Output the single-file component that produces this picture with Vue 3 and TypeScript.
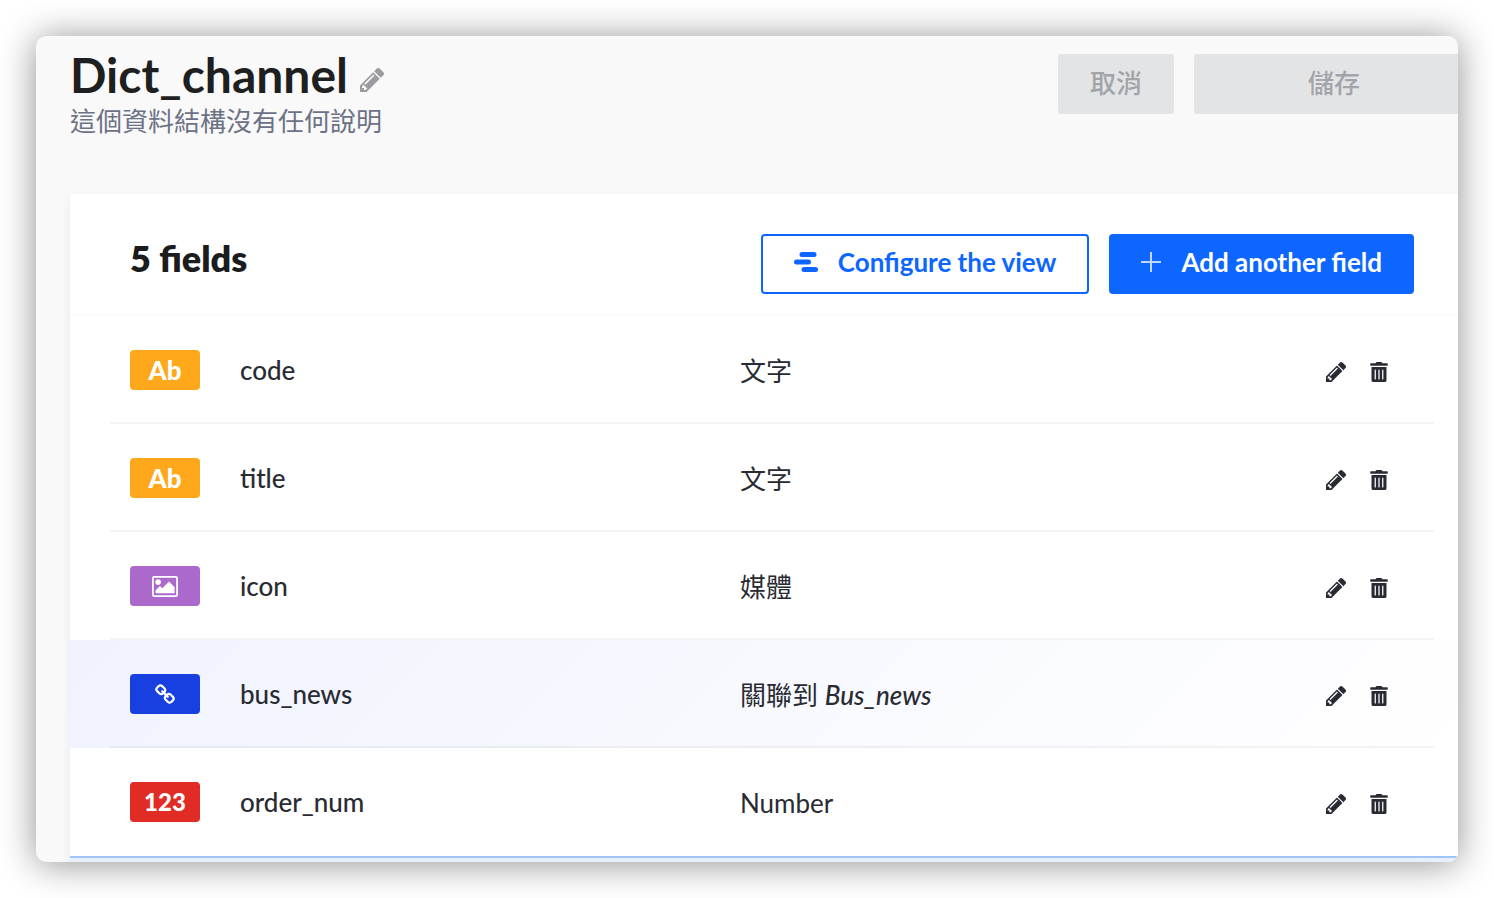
<script setup lang="ts">
import { ref } from 'vue'

type Kind = 'text' | 'media' | 'relation' | 'number'

interface Field {
  name: string
  kind: Kind
  type: string
  target?: string
}

const title = 'Dict_channel'
const description = '這個資料結構沒有任何說明'

const fields = ref<Field[]>([
  { name: 'code', kind: 'text', type: '文字' },
  { name: 'title', kind: 'text', type: '文字' },
  { name: 'icon', kind: 'media', type: '媒體' },
  { name: 'bus_news', kind: 'relation', type: '關聯到', target: 'Bus_news' },
  { name: 'order_num', kind: 'number', type: 'Number' },
])

const activeField = ref('bus_news')

const pencilPath =
  'M960 416l416 416-832 832h-416v-416zM491 1536l91-91-235-235-91 91v107h128v128h107zM940 590L415 1115a50 50 0 0 0 70 70L1010 660a50 50 0 0 0-70-70zM1643 512q0 53-37 90l-166 166-416-416 166-165q36-38 90-38 53 0 91 38l235 234q37 39 37 91z'
const trashPath =
  'M32 464a48 48 0 0 0 48 48h288a48 48 0 0 0 48-48V128H32zm272-256a16 16 0 0 1 32 0v224a16 16 0 0 1-32 0zm-96 0a16 16 0 0 1 32 0v224a16 16 0 0 1-32 0zm-96 0a16 16 0 0 1 32 0v224a16 16 0 0 1-32 0zM432 32H312l-9.4-18.7A24 24 0 0 0 281.1 0H166.8a23.72 23.72 0 0 0-21.4 13.3L136 32H16A16 16 0 0 0 0 48v32a16 16 0 0 0 16 16h416a16 16 0 0 0 16-16V48a16 16 0 0 0-16-16z'
const linkPath =
  'M1520 1216q0-40-28-68l-208-208q-28-28-68-28-42 0-72 32 3 3 19 18.5t21.5 21.5 15 19 13 25.5 3.5 27.5q0 40-28 68t-68 28q-15 0-27.5-3.5t-25.5-13-19-15-21.5-21.5-18.5-19q-33 31-33 73 0 40 28 68l206 207q27 27 68 27 40 0 68-26l147-146q28-28 28-67zm-703-705q0-40-28-68l-206-207q-28-28-68-28-39 0-68 27l-147 146q-28 28-28 67 0 40 28 68l208 208q27 27 68 27 42 0 72-31-3-3-19-18.5t-21.5-21.5-15-19-13-25.5-3.5-27.5q0-40 28-68t68-28q15 0 27.5 3.5t25.5 13 19 15 21.5 21.5 18.5 19q33-31 33-73zm895 705q0 120-85 203l-147 146q-83 83-203 83-121 0-204-85l-206-207q-83-83-83-203 0-123 88-209l-88-88q-86 88-208 88-120 0-204-84l-208-208q-84-84-84-204t85-203l147-146q83-83 203-83 121 0 204 85l206 207q83 83 83 203 0 123-88 209l88 88q86-88 208-88 120 0 204 84l208 208q84 84 84 204z'
</script>

<template>
  <main class="window">
    <header class="page-header">
      <div class="heading">
        <div class="title-row">
          <h1>{{ title }}</h1>
          <button type="button" class="icon-button title-edit" aria-label="Edit name">
            <svg class="pencil-large" viewBox="128 149 1515 1515" aria-hidden="true"><path fill-rule="evenodd" :d="pencilPath" /></svg>
          </button>
        </div>
        <p>{{ description }}</p>
      </div>
      <div class="header-actions">
        <button type="button" class="button muted" disabled>取消</button>
        <button type="button" class="button muted save" disabled>儲存</button>
      </div>
    </header>

    <section class="panel">
      <div class="panel-head">
        <h2>{{ fields.length }} fields</h2>
        <div class="panel-actions">
          <button type="button" class="button outline">
            <svg class="layout-icon" viewBox="0 0 24 20" aria-hidden="true">
              <rect x="5.5" y="0" width="17" height="5" rx="2.5" />
              <rect x="0" y="7.5" width="17" height="5" rx="2.5" />
              <rect x="7.5" y="15" width="16.5" height="5" rx="2.5" />
            </svg>
            Configure the view
          </button>
          <button type="button" class="button primary">
            <svg class="plus-icon" viewBox="0 0 20 20" aria-hidden="true"><path d="M10 0v20M0 10h20" /></svg>
            Add another field
          </button>
        </div>
      </div>

      <table>
        <colgroup>
          <col class="col-badge" />
          <col class="col-name" />
          <col />
          <col class="col-actions" />
        </colgroup>
        <tbody>
          <tr v-for="field in fields" :key="field.name" :class="{ active: field.name === activeField }">
            <td class="badge-cell">
              <span class="badge" :class="field.kind">
                <template v-if="field.kind === 'text'">Ab</template>
                <template v-else-if="field.kind === 'number'">123</template>
                <svg v-else-if="field.kind === 'media'" class="media-icon" viewBox="0 0 26 21" aria-hidden="true">
                  <rect x="0.9" y="0.9" width="24.2" height="19.2" rx="1.4" fill="none" stroke="currentColor" stroke-width="1.8" />
                  <circle cx="6.1" cy="6.1" r="2.8" />
                  <path d="M3.6 17.3v-3L8 10l2.3 2.3L17 5.6l5.6 5.7v6z" />
                </svg>
                <svg v-else class="link-icon" viewBox="64 0 1660 1660" aria-hidden="true"><path :d="linkPath" /></svg>
              </span>
            </td>
            <td class="name">{{ field.name }}</td>
            <td class="type">{{ field.type }}<template v-if="field.target">&nbsp;<em>{{ field.target }}</em></template></td>
            <td>
              <div class="row-actions">
                <button type="button" class="icon-button" :aria-label="`Edit ${field.name}`">
                  <svg class="pencil" viewBox="128 149 1515 1515" aria-hidden="true"><path fill-rule="evenodd" :d="pencilPath" /></svg>
                </button>
                <button type="button" class="icon-button" :aria-label="`Delete ${field.name}`">
                  <svg class="trash" viewBox="0 0 448 512" aria-hidden="true"><path :d="trashPath" /></svg>
                </button>
              </div>
            </td>
          </tr>
        </tbody>
      </table>
      <div class="panel-foot"></div>
    </section>
  </main>
</template>

<style>
body {
  background: #fff;
}
</style>

<style scoped>
.window {
  box-sizing: border-box;
  margin: 36px;
  padding: 18px 0 0 34px;
  overflow: hidden;
  border-radius: 10px;
  background: #f9f9f9;
  box-shadow: 0 2px 36px rgba(0, 0, 0, 0.44);
  color: #292b33;
  font-family: Lato, 'Noto Sans CJK TC', sans-serif;
  font-size: 26px;
  line-height: 40px;
}

.page-header {
  display: flex;
  justify-content: space-between;
  align-items: flex-start;
  height: 140px;
}

.title-row {
  display: flex;
  align-items: center;
  gap: 12px;
}

h1,
h2,
p {
  margin: 0;
}

h1 {
  color: #1d1f20;
  font-size: 48px;
  font-weight: 700;
  line-height: 42px;
}

p {
  padding-top: 5px;
  color: #6c7285;
  font-weight: 400;
}

button {
  font: inherit;
}

svg {
  display: block;
  flex: none;
  fill: currentColor;
}

.header-actions,
.panel-actions {
  display: flex;
  gap: 20px;
}

.header-actions {
  margin-right: -16px;
}

.button {
  display: flex;
  align-items: center;
  justify-content: center;
  gap: 20px;
  height: 60px;
  padding: 0 30px;
  border: 2px solid transparent;
  border-radius: 4px;
  font-weight: 700;
  line-height: 52px;
  white-space: nowrap;
}

.muted {
  padding-bottom: 2px;
  border-color: #e3e4e6;
  background: #e3e4e6;
  color: #a2a4aa;
  font-weight: 500;
}

.save {
  width: 280px;
}

.outline,
.primary {
  padding-bottom: 4px;
  border-color: #0c66ff;
}

.outline {
  padding-right: 31px;
  padding-left: 31px;
  background: #fff;
  color: #0c66ff;
}

.primary {
  background: #0c66ff;
  color: #fff;
}

.panel {
  background: #fff;
  box-shadow: 0 4px 8px #e3e9f3;
}

.panel-head {
  display: flex;
  justify-content: space-between;
  align-items: flex-start;
  padding: 40px 44px 20px 60px;
  border-bottom: 2px solid #fbfbfb;
}

h2 {
  color: #1b1c1e;
  font-size: 36px;
  font-weight: 800;
  line-height: 48px;
}

table {
  width: 100%;
  table-layout: fixed;
  border-collapse: collapse;
}

.col-badge {
  width: 170px;
}

.col-name {
  width: 500px;
}

.col-actions {
  width: 200px;
}

tr {
  position: relative;
  height: 108px;
}

tr:not(:last-child) .badge-cell::after {
  content: '';
  position: absolute;
  right: 24px;
  bottom: 0;
  left: 40px;
  height: 2px;
  background: rgba(14, 22, 34, 0.05);
}

.active {
  background: linear-gradient(135deg, #f0f3fe, #fff);
}

td {
  padding: 0;
  vertical-align: middle;
}

.badge-cell {
  padding-left: 60px;
}

.badge {
  display: flex;
  align-items: center;
  justify-content: center;
  width: 70px;
  height: 40px;
  border-radius: 4px;
  color: #fff;
  font-weight: 900;
}

.text {
  background: #ffa81c;
}

.media {
  background: #ac69cc;
}

.relation {
  background: #1840e0;
}

.number {
  background: #e02c24;
  font-size: 24px;
}

.name {
  font-weight: 500;
}

.type {
  padding-top: 2px;
}

em {
  font-weight: 500;
}

.row-actions {
  display: flex;
  align-items: center;
  justify-content: flex-end;
  gap: 24px;
  padding: 4px 70px 0 0;
}

.icon-button {
  padding: 0;
  border: 0;
  background: none;
  color: #292b33;
}

.title-row .title-edit {
  padding-top: 10px;
  color: #9b9ca1;
}

.pencil-large {
  width: 24px;
  height: 24px;
}

.pencil {
  width: 20px;
  height: 20px;
}

.trash {
  width: 18px;
  height: 20px;
}

.layout-icon {
  width: 24px;
  height: 20px;
}

.plus-icon {
  width: 20px;
  height: 20px;
  fill: none;
  stroke: rgba(255, 255, 255, 0.75);
  stroke-width: 2;
}

.media-icon {
  width: 26px;
  height: 21px;
}

.link-icon {
  width: 20px;
  height: 20px;
}

.panel-foot {
  height: 4px;
  border-top: 2px solid #9fc5f8;
  background: #e6f0fb;
}
</style>
